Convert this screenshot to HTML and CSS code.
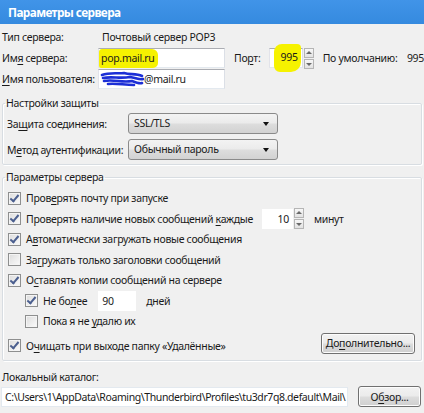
FILE: index.html
```html
<!DOCTYPE html>
<html lang="ru">
<head>
<meta charset="UTF-8">
<title>Параметры сервера</title>
<link rel="stylesheet" href="styles.css">
</head>
<body>

<div class="title">Параметры сервера</div>

<!-- Сервер -->
<div class="server">
    <div class="row">
        <span class="lbl">Тип сервера:</span>
        <span class="value">Почтовый сервер POP3</span>
    </div>
    <div class="row">
        <span class="lbl">Им<u>я</u> сервера:</span>
        <div class="field host"><mark class="hl">pop.mail.ru</mark></div>
        <span class="port-lbl">По<u>р</u>т:</span>
        <div class="field port"><mark class="hl big">995</mark></div>
        <div class="spin">
            <span class="up"></span>
            <span class="down"></span>
        </div>
        <span class="def-lbl">По умолчанию:</span>
        <span class="def-val">995</span>
    </div>
    <div class="row">
        <span class="lbl"><u>И</u>мя пользователя:</span>
        <div class="field host">
            <svg class="scribble" width="44" height="16" viewBox="0 0 44 16">
                <path d="M2 4 C10 1 18 3 24 2 C30 4 36 2 42 5 M3 7 C12 5 20 8 30 6 C36 7 40 9 43 8 M4 10 C14 8 22 12 32 10 C37 12 40 13 42 12 M8 13 C16 12 24 14 34 14" fill="none" stroke="#1c2fd6" stroke-width="2.6" stroke-linecap="round"/>
            </svg><span>@mail.ru</span>
        </div>
    </div>
</div>

<!-- Настройки защиты -->
<fieldset class="group security">
    <legend>Настройки защиты</legend>
    <div class="sel-row">
        <span class="sel-lbl">За<u>щ</u>ита соединения:</span>
        <div class="select">SSL/TLS<span class="arrow"></span></div>
    </div>
    <div class="sel-row">
        <span class="sel-lbl">М<u>е</u>тод аутентификации:</span>
        <div class="select">Обычный пароль<span class="arrow"></span></div>
    </div>
</fieldset>

<!-- Параметры сервера -->
<fieldset class="group options">
    <legend>Параметры сервера</legend>
    <div class="check-row"><span class="cb on"></span><span>Пров<u>е</u>рять почту при запуске</span></div>
    <div class="check-row">
        <span class="cb on"></span><span>Проверять наличие новых сообщений <u>к</u>аждые</span>
        <div class="field minutes">10</div>
        <div class="spin">
            <span class="up"></span>
            <span class="down"></span>
        </div>
        <span class="unit">минут</span>
    </div>
    <div class="check-row"><span class="cb on"></span><span>А<u>в</u>томатически загружать новые сообщения</span></div>
    <div class="check-row"><span class="cb"></span><span>За<u>г</u>ружать только заголовки сообщений</span></div>
    <div class="check-row"><span class="cb on"></span><span>О<u>с</u>тавлять копии сообщений на сервере</span></div>
    <div class="check-row sub">
        <span class="cb on"></span><span>Не бо<u>л</u>ее</span>
        <div class="field days">90</div>
        <span class="unit">дней</span>
    </div>
    <div class="check-row sub"><span class="cb"></span><span>Пока я не <u>у</u>далю их</span></div>
    <div class="last-row">
        <div class="check-row"><span class="cb on"></span><span>О<u>ч</u>ищать при выходе папку «Удалённые»</span></div>
        <button class="btn more">До<u>п</u>олнительно...</button>
    </div>
</fieldset>

<!-- Локальный каталог -->
<div class="local">
    <div class="local-lbl">Локальный каталог:</div>
    <div class="path-row">
        <div class="field path">C:\Users\1\AppData\Roaming\Thunderbird\Profiles\tu3dr7q8.default\Mail\</div>
        <button class="btn browse">О<u>б</u>зор...</button>
    </div>
</div>

</body>
</html>
```

FILE: styles.css
```css
body {
    margin: 0;
    width: 424px;
    height: 413px;
    overflow: hidden;
    background: #f0f0f0;
    font-family: "Noto Sans", sans-serif;
    font-size: 10.5px;
    letter-spacing: -0.3px;
    color: #1a1a1a;
    white-space: nowrap;
}

u {
    text-decoration-thickness: 1px;
    text-underline-offset: 2px;
}

.title {
    height: 24px;
    line-height: 24px;
    padding-left: 8px;
    background: linear-gradient(#4194e8, #358adf);
    color: #fff;
    font-weight: bold;
    font-size: 11.8px;
    letter-spacing: -0.6px;
}

/* Сервер */
.server {
    display: flex;
    flex-direction: column;
    gap: 1px;
    padding: 3px 0 0 2px;
}

.row {
    display: flex;
    align-items: center;
    height: 20px;
}

.lbl {
    width: 96px;
    flex: none;
}

.value {
    margin-left: 4px;
}

.field {
    display: flex;
    align-items: center;
    box-sizing: border-box;
    height: 20px;
    padding: 0 3px;
    background: #fff;
    border: 1px solid;
    border-color: #abadb3 #dbdfe6 #e3e9ef #e2e3ea;
    overflow: hidden;
    flex: none;
}

.host {
    width: 127px;
}

.field.host,
.field.port {
    overflow: visible;
}

.hl {
    background: #f6f200;
    color: #1a1a1a;
    padding: 2px 3px 3px 2px;
    margin-left: -3px;
    border-radius: 3px 6px 5px 2px;
}

.hl.big {
    padding: 6px 3px 8px 7px;
    margin-left: 0;
    border-radius: 8px 4px 10px 6px;
}

.scribble {
    margin-left: -2px;
    flex: none;
}

.port-lbl {
    margin-left: 9px;
    width: 35px;
}

.port {
    width: 34px;
    justify-content: flex-end;
    padding-right: 1px;
}

.spin {
    display: flex;
    flex-direction: column;
    gap: 1px;
    margin-left: 1px;
}

.spin span {
    position: relative;
    width: 8px;
    height: 8px;
    border: 1px solid #b5b5b5;
    background: linear-gradient(#f7f7f7, #e2e2e2);
}

.spin span::after {
    content: "";
    position: absolute;
    left: 1px;
    border-left: 3px solid transparent;
    border-right: 3px solid transparent;
}

.spin .up::after {
    top: 2px;
    border-bottom: 3px solid #6a6a6a;
}

.spin .down::after {
    top: 3px;
    border-top: 3px solid #6a6a6a;
}

.def-lbl {
    margin-left: 9px;
    width: 85px;
}

/* Группы */
.group {
    margin: 7px 2px 0;
    padding: 0 6px 4px 4px;
    border: 1px solid #d8dde2;
    border-radius: 2px;
    box-shadow: inset 1px 1px 0 #fff, 1px 1px 0 #fff;
}

.group legend {
    padding: 0 1px;
    margin-left: -2px;
    line-height: 15px;
}

.sel-row {
    display: flex;
    align-items: center;
    height: 21px;
    margin-top: 2px;
}

.sel-row + .sel-row {
    margin-top: 5px;
}

.sel-lbl {
    width: 121px;
    flex: none;
}

.select {
    position: relative;
    box-sizing: border-box;
    width: 150px;
    height: 21px;
    line-height: 19px;
    padding-left: 5px;
    border: 1px solid #8a8a8a;
    border-radius: 3px;
    background: linear-gradient(#f3f3f3 0%, #ebebeb 48%, #dddddd 52%, #d2d2d2 100%);
}

.arrow {
    position: absolute;
    right: 8px;
    top: 8px;
    border-left: 3.5px solid transparent;
    border-right: 3.5px solid transparent;
    border-top: 4px solid #111;
}

.options {
    margin-top: 5px;
    padding-top: 3px;
}

.check-row {
    display: flex;
    align-items: center;
    height: 20.5px;
}

.check-row.sub {
    padding-left: 17px;
}

.cb {
    position: relative;
    box-sizing: border-box;
    width: 13px;
    height: 13px;
    margin: 0 5px 0 1px;
    border: 1px solid #8e8f8f;
    background: linear-gradient(135deg, #dcdcdc, #fbfbfb);
    box-shadow: inset 0 0 0 1px #f4f4f4;
    flex: none;
}

.cb.on::after {
    content: "";
    position: absolute;
    left: 3px;
    top: 0;
    width: 3px;
    height: 7px;
    border: solid #4b5f8f;
    border-width: 0 2px 2px 0;
    transform: rotate(40deg);
}

.minutes {
    width: 31px;
    margin-left: 9px;
    justify-content: flex-end;
    border-color: #fff;
}

.days {
    width: 38px;
    margin-left: 11px;
    border-color: #fff;
}

.unit {
    margin-left: 10px;
}

.last-row {
    display: flex;
    align-items: flex-start;
    justify-content: space-between;
    margin-top: 1px;
}

.last-row .check-row {
    margin-top: 3px;
}

.btn {
    box-sizing: border-box;
    height: 21px;
    padding: 0;
    border: 1px solid #707070;
    border-radius: 3px;
    background: linear-gradient(#f2f2f2 0%, #ebebeb 48%, #dddddd 52%, #cfcfcf 100%);
    box-shadow: inset 0 0 0 1px #fcfcfc;
    font-family: inherit;
    font-size: 10.5px;
    letter-spacing: -0.3px;
    color: #1a1a1a;
}

.more {
    width: 94px;
}

/* Локальный каталог */
.local {
    padding: 9px 1px 0 1px;
}

.local-lbl {
    line-height: 15px;
    padding-left: 1px;
}

.path-row {
    display: flex;
    align-items: center;
    gap: 10px;
    margin-top: 1px;
}

.path {
    flex: 1;
    min-width: 0;
    border-color: #e3e9ef;
    padding-left: 3px;
    letter-spacing: -0.4px;
}

.browse {
    width: 63px;
    margin-right: 2px;
    flex: none;
}
```
